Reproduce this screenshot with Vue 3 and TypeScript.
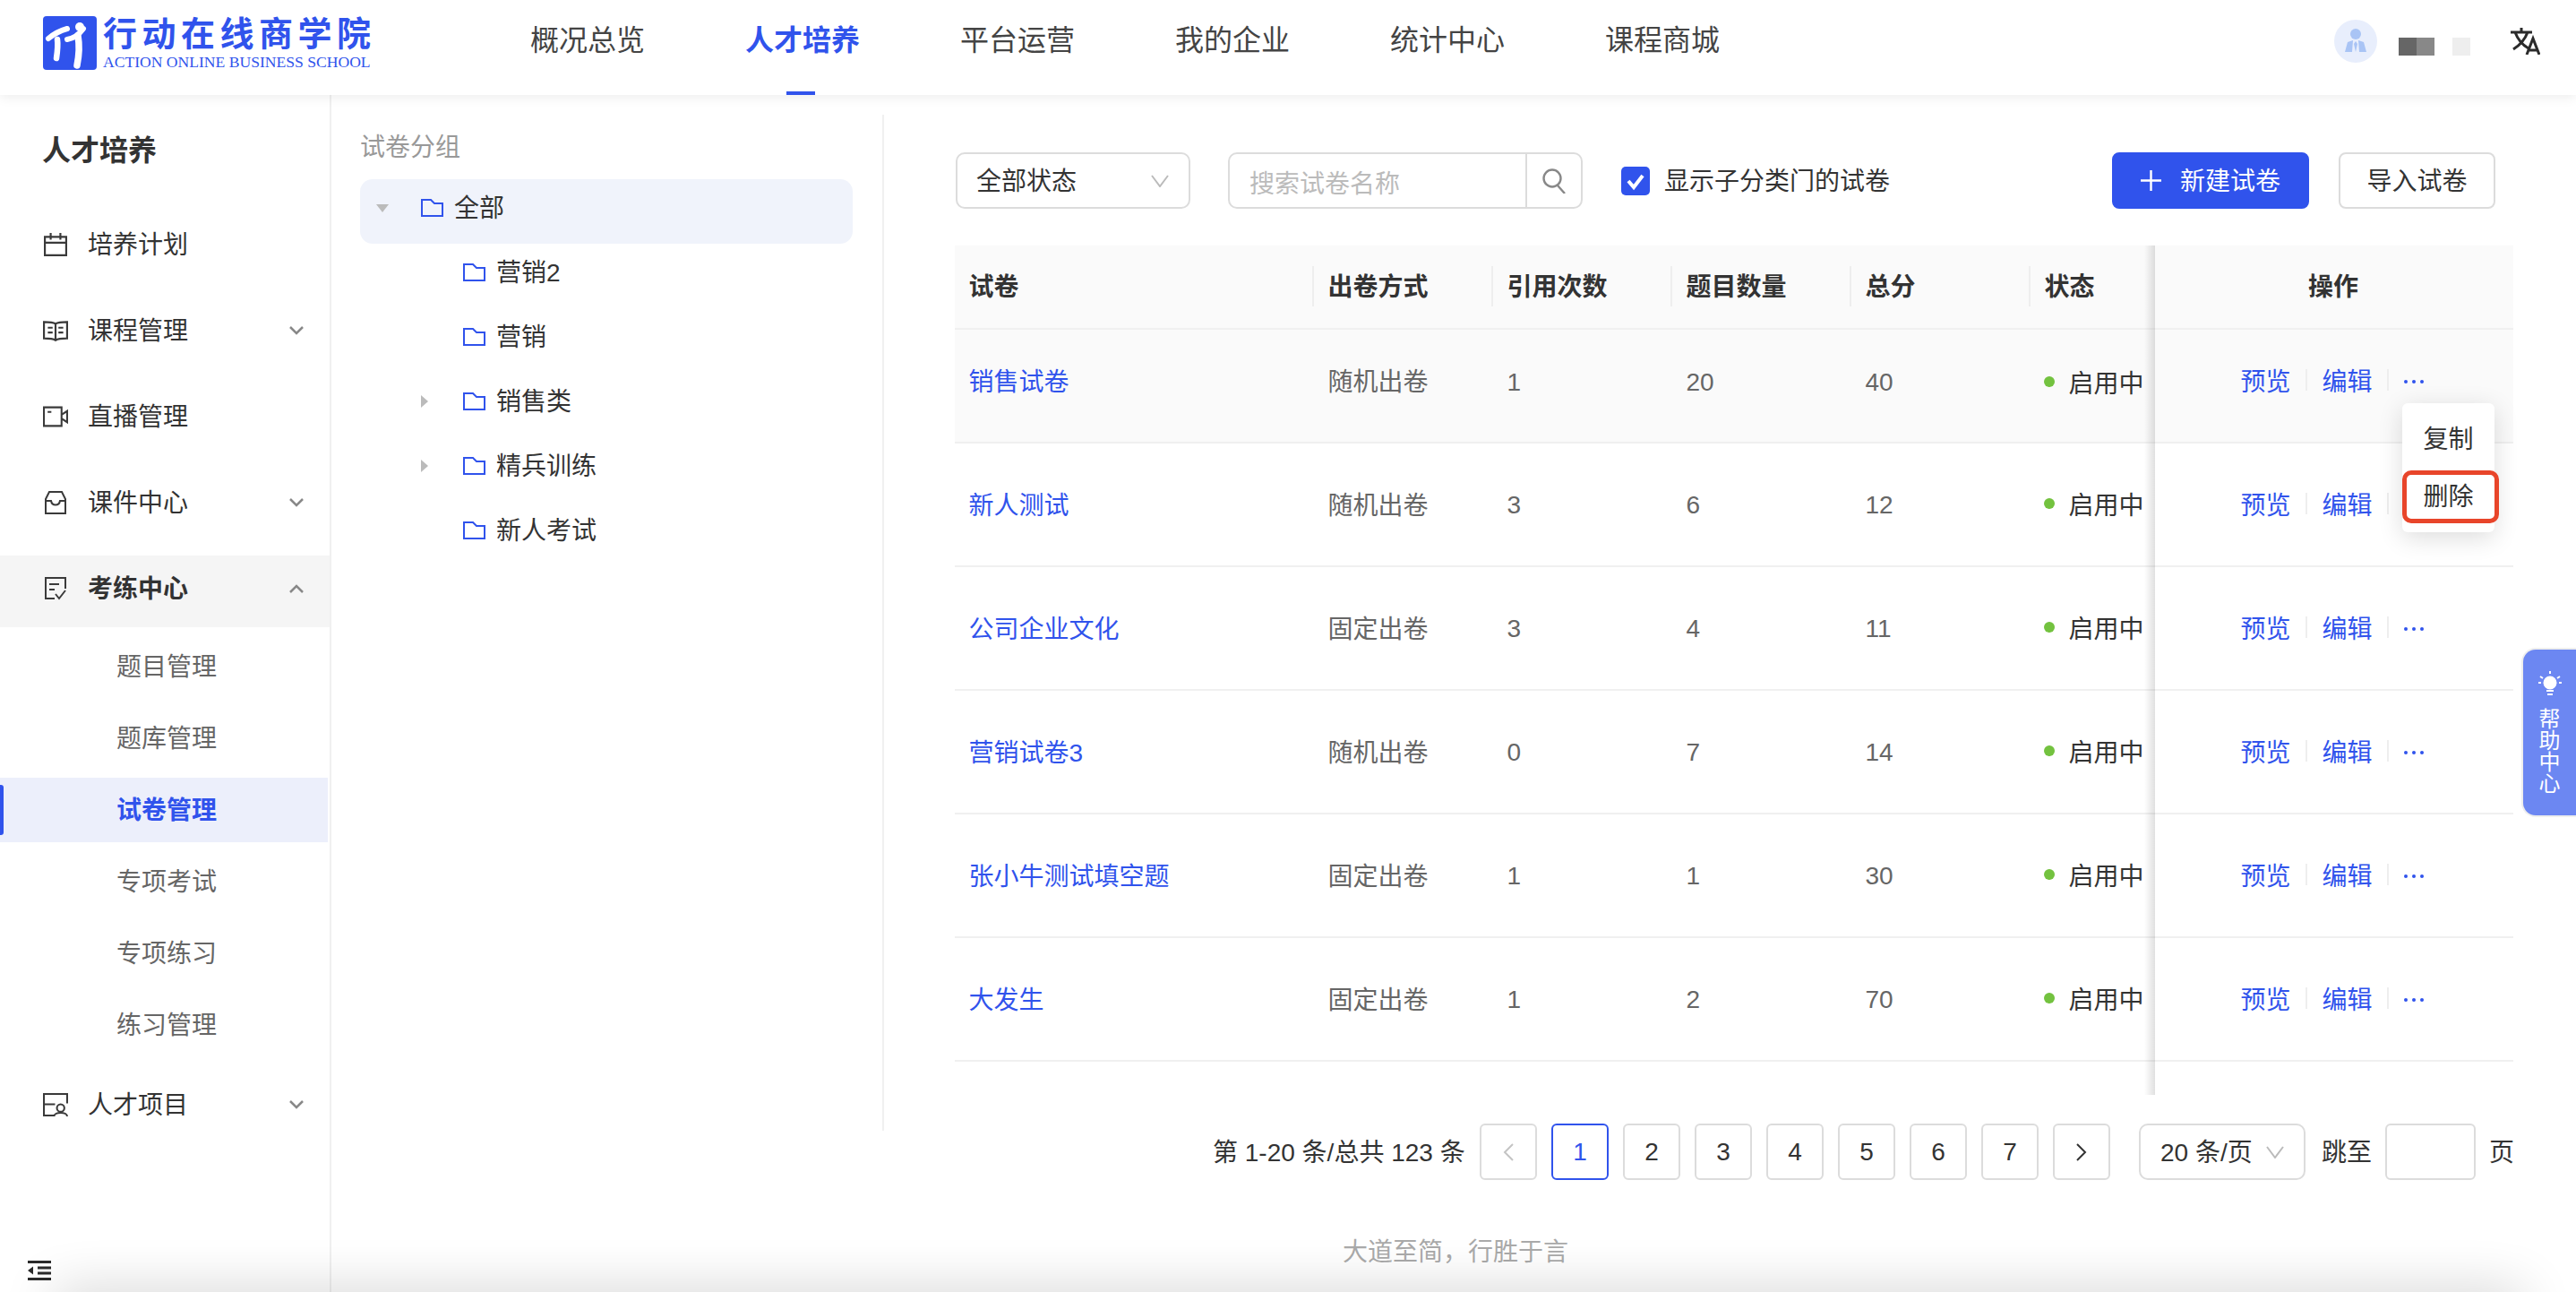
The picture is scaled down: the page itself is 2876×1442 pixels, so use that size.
<script setup lang="ts">
// #region state
const navItems = ['概况总览', '人才培养', '平台运营', '我的企业', '统计中心', '课程商城']

const subMenu = ['题目管理', '题库管理', '试卷管理', '专项考试', '专项练习', '练习管理']

const treeRows = [
  { label: '全部', level: 0, arrow: 'down', active: true },
  { label: '营销2', level: 1, arrow: '' },
  { label: '营销', level: 1, arrow: '' },
  { label: '销售类', level: 1, arrow: 'right' },
  { label: '精兵训练', level: 1, arrow: 'right' },
  { label: '新人考试', level: 1, arrow: '' }
]

const columns = ['试卷', '出卷方式', '引用次数', '题目数量', '总分', '状态']

const papers = [
  { name: '销售试卷', mode: '随机出卷', refs: 1, count: 20, score: 40 },
  { name: '新人测试', mode: '随机出卷', refs: 3, count: 6, score: 12 },
  { name: '公司企业文化', mode: '固定出卷', refs: 3, count: 4, score: 11 },
  { name: '营销试卷3', mode: '随机出卷', refs: 0, count: 7, score: 14 },
  { name: '张小牛测试填空题', mode: '固定出卷', refs: 1, count: 1, score: 30 },
  { name: '大发生', mode: '固定出卷', refs: 1, count: 2, score: 70 }
]

const pages = [1, 2, 3, 4, 5, 6, 7]
// #endregion
</script>

<template>
  <div class="page">
    <header class="topbar">
      <div class="logo">
        <svg class="logo-mark" viewBox="0 0 60 60">
          <rect width="60" height="60" rx="4" fill="#3053ec" />
          <g fill="none" stroke="#fff" stroke-linecap="round">
            <path d="M6 25C12 20 20 16 27 14" stroke-width="6" />
            <path d="M27 26C33 25 40 21 45 14" stroke-width="6" />
            <path d="M16 26C17 33 16 40 15 47" stroke-width="6.5" />
            <path d="M39 22C41 33 40 45 38 55" stroke-width="7.5" />
          </g>
          <circle cx="41" cy="12" r="5" fill="#fff" />
        </svg>
        <div class="logo-text">
          <div class="logo-title">行动在线商学院</div>
          <div class="logo-sub">ACTION ONLINE BUSINESS SCHOOL</div>
        </div>
      </div>

      <nav class="nav">
        <div
          v-for="item in navItems"
          :key="item"
          class="nav-item"
          :class="{ active: item === '人才培养' }"
        >
          {{ item }}
        </div>
      </nav>

      <div class="user">
        <div class="avatar">
          <svg viewBox="0 0 48 48" width="48" height="48">
            <circle cx="24" cy="16" r="6" fill="#a9c4f5" />
            <path d="M12 36l3-11 6-2-1 13zM36 36l-3-11-6-2 1 13z" fill="#a9c4f5" />
            <path d="M24 24l2 3-2 9-2-9z" fill="#a9c4f5" />
          </svg>
        </div>
        <div class="mosaic">
          <i class="m1" /><i class="m2" /><i class="m3" />
        </div>
        <svg class="translate" viewBox="0 0 33 30" fill="none" stroke="#2b2b2b" stroke-width="3">
          <path d="M0 5H24M12 0V5M5 5C8 13 13 19 20 23M19 5C16 13 11 19 3 24" />
          <path d="M18 30L25 12L32 30M20 25H30" />
        </svg>
      </div>
    </header>

    <div class="body">
      <aside class="sidebar">
        <div class="side-title">人才培养</div>

        <div class="menu-item">
          <svg class="menu-icon" viewBox="0 0 24 24">
            <path d="M1 4H23V23H1zM1 10H23M7 0V7M17 0V7" />
          </svg>
          <span>培养计划</span>
        </div>
        <div class="menu-item">
          <svg class="menu-icon" viewBox="0 0 26 24">
            <path d="M13 5C10 3 5 3 1 3V20C5 20 10 20 13 22C16 20 21 20 25 20V3C21 3 16 3 13 5zM13 5V22M5 9H10M5 14H10M16 9H21M16 14H21" />
          </svg>
          <span>课程管理</span>
          <svg class="chevron" viewBox="0 0 18 12"><path d="M2 2L9 9L16 2" /></svg>
        </div>
        <div class="menu-item">
          <svg class="menu-icon" viewBox="0 0 27 24">
            <path d="M1 2H20V22H1zM20 10L26 6V18L20 14M5 7H9" />
          </svg>
          <span>直播管理</span>
        </div>
        <div class="menu-item">
          <svg class="menu-icon" viewBox="0 0 24 26">
            <path d="M5 1H19L23 9V25H1V9zM1 11H7C8 17 16 17 17 11H23" />
          </svg>
          <span>课件中心</span>
          <svg class="chevron" viewBox="0 0 18 12"><path d="M2 2L9 9L16 2" /></svg>
        </div>
        <div class="menu-item open">
          <svg class="menu-icon" viewBox="0 0 24 26">
            <path d="M23 13V1H1V24H11M5 8H16M5 14H11M12 19L16 24L23 15" />
          </svg>
          <span>考练中心</span>
          <svg class="chevron" viewBox="0 0 18 12"><path d="M2 10L9 3L16 10" /></svg>
        </div>

        <div class="submenu">
          <div
            v-for="item in subMenu"
            :key="item"
            class="sub-item"
            :class="{ active: item === '试卷管理' }"
          >
            {{ item }}
          </div>
        </div>

        <div class="menu-item">
          <svg class="menu-icon" viewBox="0 0 27 25">
            <path d="M26 11V1H1V24H12M1 12H13" />
            <circle cx="19" cy="16" r="4" />
            <path d="M12 25C12 20 26 20 26 25" />
          </svg>
          <span>人才项目</span>
          <svg class="chevron" viewBox="0 0 18 12"><path d="M2 2L9 9L16 2" /></svg>
        </div>

        <div class="collapse">
          <svg viewBox="0 0 26 22" width="26" height="22" fill="#2b2b2b">
            <rect width="26" height="3" />
            <rect x="11" y="6.5" width="15" height="3" />
            <rect x="11" y="12.5" width="15" height="3" />
            <rect y="19" width="26" height="3" />
            <path d="M0 11L6 6.500V15.500z" />
          </svg>
        </div>
      </aside>

      <section class="tree">
        <div class="tree-title">试卷分组</div>
        <div
          v-for="row in treeRows"
          :key="row.label"
          class="tree-row"
          :class="[`level-${row.level}`, { active: row.active }]"
        >
          <span class="tree-arrow">
            <i v-if="row.arrow" :class="`tri-${row.arrow}`" />
          </span>
          <svg class="folder" viewBox="0 0 25 20" fill="none" stroke="#3053ec" stroke-width="2">
            <path d="M1 1H11L15 5H24V19H1z" />
          </svg>
          <span class="tree-label">{{ row.label }}</span>
        </div>
      </section>

      <main class="main">
        <div class="toolbar">
          <div class="select status-select">
            <span class="lift">全部状态</span>
            <svg viewBox="0 0 20 14" width="20" height="14" fill="none" stroke="#bbb" stroke-width="2"><path d="M1 1L10 13L19 1" /></svg>
          </div>
          <div class="search">
            <div class="search-input">搜索试卷名称</div>
            <div class="search-btn">
              <svg viewBox="0 0 28 28" width="28" height="28" fill="none" stroke="#888" stroke-width="2.400">
                <circle cx="12" cy="11" r="9.500" />
                <path d="M18 19L26 28" />
              </svg>
            </div>
          </div>
          <div class="check">
            <span class="check-box">
              <svg viewBox="0 0 32 32" width="32" height="32" fill="none" stroke="#fff" stroke-width="4"><path d="M8 16L14 23L24 10" /></svg>
            </span>
            <span class="lift">显示子分类门的试卷</span>
          </div>
          <button class="btn primary">
            <svg viewBox="0 0 23 23" width="23" height="23" stroke="#fff" stroke-width="2.400"><path d="M11.500 0V23M0 11.500H23" /></svg>
            <span class="lift">新建试卷</span>
          </button>
          <button class="btn"><span class="lift">导入试卷</span></button>
        </div>

        <div class="table">
          <div class="row head">
            <div v-for="col in columns" :key="col" class="cell">{{ col }}</div>
            <div class="cell ops">操作</div>
          </div>
          <div
            v-for="(paper, i) in papers"
            :key="paper.name"
            class="row"
            :class="{ hover: i === 0 }"
          >
            <div class="cell link">{{ paper.name }}</div>
            <div class="cell muted">{{ paper.mode }}</div>
            <div class="cell muted num">{{ paper.refs }}</div>
            <div class="cell muted num">{{ paper.count }}</div>
            <div class="cell muted num">{{ paper.score }}</div>
            <div class="cell status"><i class="dot" />启用中</div>
            <div class="cell ops">
              <span class="link">预览</span>
              <i class="op-sep" />
              <span class="link">编辑</span>
              <i class="op-sep" />
              <span class="more"><i /><i /><i /></span>
            </div>
          </div>

          <div class="fixed-shadow" />

          <div class="dropdown">
            <div class="drop-item">复制</div>
            <div class="drop-item">删除</div>
            <div class="mark" />
          </div>
        </div>

        <div class="pager">
          <span class="pager-total lift">第 1-20 条/总共 123 条</span>
          <div class="page-btn disabled">
            <svg viewBox="0 0 12 20" width="12" height="20" fill="none" stroke="#c4c4c4" stroke-width="2"><path d="M11 1L2 10L11 19" /></svg>
          </div>
          <div
            v-for="p in pages"
            :key="p"
            class="page-btn"
            :class="{ current: p === 1 }"
          >
            {{ p }}
          </div>
          <div class="page-btn">
            <svg viewBox="0 0 12 20" width="12" height="20" fill="none" stroke="#333" stroke-width="2"><path d="M1 1L10 10L1 19" /></svg>
          </div>
          <div class="select size-select">
            <span class="lift">20 条/页</span>
            <svg viewBox="0 0 20 14" width="20" height="14" fill="none" stroke="#bbb" stroke-width="2"><path d="M1 1L10 13L19 1" /></svg>
          </div>
          <span class="jump lift">跳至</span>
          <div class="jump-input" />
          <span class="jump-unit lift">页</span>
        </div>

        <div class="slogan">大道至简，行胜于言</div>
      </main>
    </div>

    <div class="help">
      <svg viewBox="0 0 26 28" width="26" height="28" fill="none" stroke="#fff" stroke-width="2">
        <circle cx="13" cy="13" r="6.500" fill="#fff" />
        <path d="M13 0V3M2 6L5 8M24 6L21 8M0 13H3M23 13H26M9 22H17M10 26H16" />
      </svg>
      <div class="help-text">帮助中心</div>
    </div>

    <div class="edge-shadow" />
  </div>
</template>

<style>
html,
body {
  margin: 0;
  background: #fff;
}
</style>

<style scoped>
.page {
  position: relative;
  display: flex;
  flex-direction: column;
  height: 1442px;
  overflow: hidden;
  background: #fff;
  color: #333;
  font-family: "Liberation Sans", "Noto Sans CJK SC", sans-serif;
  font-size: 28px;
}

.lift {
  margin-bottom: 4px;
}

/* top bar */
.topbar {
  position: relative;
  z-index: 2;
  display: flex;
  align-items: center;
  flex: 0 0 106px;
  padding: 0 40px 0 48px;
  background: #fff;
  box-shadow: 0 3px 12px rgba(0, 0, 0, 0.07);
}

.logo {
  display: flex;
  gap: 7px;
  margin-bottom: 10px;
}

.logo-mark {
  width: 60px;
  height: 60px;
}

.logo-text {
  width: 299px;
  color: #3053ec;
}

.logo-title {
  font-size: 38px;
  font-weight: 700;
  line-height: 40px;
  letter-spacing: 5.500px;
  white-space: nowrap;
}

.logo-sub {
  margin-top: 2px;
  font-family: "Liberation Serif", serif;
  font-size: 17.600px;
  line-height: 18px;
  white-space: nowrap;
}

.nav {
  display: flex;
  align-self: stretch;
  gap: 112px;
  margin-left: 178px;
}

.nav-item {
  position: relative;
  display: flex;
  align-items: center;
  padding-bottom: 23px;
  font-size: 32px;
  color: #444;
}

.nav-item.active {
  color: #3053ec;
  font-weight: 700;
}

.nav-item.active::after {
  content: "";
  position: absolute;
  bottom: 0;
  left: 46px;
  width: 32px;
  height: 4px;
  background: #3053ec;
}

.user {
  display: flex;
  align-items: center;
  margin-left: auto;
  margin-bottom: 14px;
}

.avatar {
  width: 48px;
  height: 48px;
  border-radius: 50%;
  background: #e8eefc;
}

.mosaic {
  display: flex;
  margin: 12px 0 0 24px;
}

.mosaic i {
  width: 20px;
  height: 20px;
}

.m1 { background: #666; }
.m2 { background: #888; }
.m3 { margin-left: 20px; background: #eee; }

.translate {
  width: 33px;
  height: 30px;
  margin-left: 45px;
}

/* left menu */
.body {
  display: flex;
  flex: 1;
  min-height: 0;
}

.sidebar {
  display: flex;
  flex-direction: column;
  flex: 0 0 370px;
  box-sizing: border-box;
  border-right: 2px solid #f0f0f0;
}

.side-title {
  padding: 38px 0 0 47px;
  margin-bottom: 44px;
  font-size: 32px;
  font-weight: 700;
  line-height: 48px;
}

.menu-item {
  display: flex;
  align-items: center;
  flex: 0 0 80px;
  box-sizing: border-box;
  margin-bottom: 16px;
  padding: 0 28px 10px 0;
}

.menu-item.open {
  margin-bottom: 8px;
  background: #f5f5f5;
  font-weight: 700;
}

.menu-icon {
  width: 28px;
  height: 26px;
  margin: 4px 22px 0 48px;
  fill: none;
  stroke: #3a3a3a;
  stroke-width: 2;
}

.chevron {
  width: 18px;
  height: 12px;
  margin: 4px 0 0 auto;
  fill: none;
  stroke: #888;
  stroke-width: 2.500;
}

.submenu {
  display: flex;
  flex-direction: column;
  gap: 8px;
  margin-bottom: 16px;
  color: #666;
}

.sub-item {
  position: relative;
  display: flex;
  align-items: center;
  box-sizing: border-box;
  height: 72px;
  margin-right: 2px;
  padding: 0 0 4px 130px;
}

.sub-item.active {
  background: #eceffb;
  color: #3053ec;
  font-weight: 700;
}

.sub-item.active::before {
  content: "";
  position: absolute;
  top: 8px;
  left: 0;
  width: 4px;
  height: 56px;
  border-radius: 0 3px 3px 0;
  background: #3053ec;
}

.collapse {
  display: flex;
  margin-top: auto;
  padding: 0 0 13px 31px;
}

/* group tree */
.tree {
  flex: 0 0 617px;
  box-sizing: border-box;
  height: 1134px;
  margin-top: 22px;
  padding: 20px 33px 0 32px;
  border-right: 2px solid #f0f0f0;
}

.tree-title {
  margin-bottom: 18px;
  color: #999;
  line-height: 34px;
}

.tree-row {
  display: flex;
  align-items: center;
  box-sizing: border-box;
  height: 72px;
  padding-bottom: 8px;
  border-radius: 14px;
}

.tree-label {
  margin-bottom: 4px;
}

.tree-row.active {
  background: #f0f3fb;
}

.level-0 { padding-left: 18px; }
.level-1 { padding-left: 65px; }

.tree-arrow {
  display: flex;
  flex: 0 0 50px;
}

.tri-down {
  width: 0;
  height: 0;
  border: 7px solid transparent;
  border-top: 9px solid #bbb;
  border-bottom: 0;
}

.tri-right {
  width: 0;
  height: 0;
  margin-left: 3px;
  border: 7px solid transparent;
  border-left: 8px solid #bbb;
  border-right: 0;
}

.folder {
  width: 25px;
  height: 20px;
  margin-right: 12px;
}

/* main */
.main {
  flex: 1;
  min-width: 0;
  padding: 64px 70px 0 79px;
}

.toolbar {
  display: flex;
  align-items: center;
  height: 63px;
  padding: 0 20px 0 1px;
}

.select {
  display: flex;
  align-items: center;
  justify-content: space-between;
  flex-shrink: 0;
  box-sizing: border-box;
  height: 63px;
  border: 2px solid #dcdcdc;
  border-radius: 10px;
}

.status-select {
  width: 262px;
  padding: 0 22px 0 21px;
}

.search {
  display: flex;
  box-sizing: border-box;
  width: 396px;
  height: 63px;
  margin-left: 42px;
  border: 2px solid #dcdcdc;
  border-radius: 10px;
}

.search-input {
  flex: 1;
  padding: 14px 0 0 22px;
  color: #bbb;
  line-height: 40px;
}

.search-btn {
  display: flex;
  align-items: center;
  justify-content: center;
  width: 60px;
  border-left: 2px solid #dcdcdc;
}

.check {
  display: flex;
  align-items: center;
  gap: 16px;
  margin-left: 43px;
}

.check-box {
  width: 32px;
  height: 32px;
  border-radius: 5px;
  background: #3053ec;
}

.btn {
  display: flex;
  align-items: center;
  justify-content: center;
  box-sizing: border-box;
  width: 175px;
  height: 63px;
  margin-left: 33px;
  border: 2px solid #dcdcdc;
  border-radius: 8px;
  background: #fff;
  color: #333;
  font: inherit;
}

.btn.primary {
  gap: 21px;
  width: 220px;
  margin-left: auto;
  border-color: #3053ec;
  background: #3053ec;
  color: #fff;
}

.table {
  position: relative;
  height: 948px;
  margin-top: 41px;
}

.row {
  display: grid;
  grid-template-columns: 399px 200px 200px 200px 200px 141px 400px;
  box-sizing: border-box;
  height: 138px;
  border-bottom: 2px solid #f0f0f0;
}

.row.head {
  height: 94px;
  background: #fafafa;
  font-weight: 700;
}

.row.hover {
  height: 127px;
  background: #fafafa;
}

.cell {
  display: flex;
  align-items: center;
  padding: 0 0 2px 17.500px;
  white-space: nowrap;
}

.head .cell {
  padding-bottom: 4px;
}

.row .cell:first-child {
  padding-left: 15.500px;
}

.cell.num {
  padding: 2px 0 0 17.500px;
}

.row.hover .cell {
  padding-bottom: 14px;
}

.row.hover .cell.num,
.row.hover .cell.status {
  padding-bottom: 9px;
}

.head .cell {
  position: relative;
}

.head .cell + .cell:not(.ops)::before {
  content: "";
  position: absolute;
  top: 23px;
  left: 0;
  width: 2px;
  height: 45px;
  background: #eee;
}

.link {
  color: #3053ec;
}

.muted {
  color: #666;
}

.cell.status {
  padding-left: 17px;
}

.dot {
  width: 12px;
  height: 12px;
  margin-right: 15.500px;
  border-radius: 50%;
  background: #73c23f;
}

.cell.ops {
  padding-left: 95.500px;
  background: #fff;
}

.head .cell.ops {
  justify-content: center;
  padding-left: 0;
  padding-right: 2px;
  background: #fafafa;
}

.row.hover .cell.ops {
  background: #fafafa;
}

.op-sep {
  width: 2px;
  height: 24px;
  margin: 0 16.500px;
  background: #eee;
}

.more {
  display: flex;
  gap: 5px;
  margin: 4px 0 0 0;
}

.more i {
  width: 4px;
  height: 4px;
  border-radius: 50%;
  background: #3053ec;
}

.fixed-shadow {
  position: absolute;
  top: 0;
  bottom: 0;
  left: 1328px;
  width: 12px;
  background: linear-gradient(90deg, rgba(0, 0, 0, 0), rgba(0, 0, 0, 0.12));
}

.dropdown {
  position: absolute;
  top: 176px;
  left: 1616px;
  box-sizing: border-box;
  width: 103px;
  height: 144px;
  padding-top: 6px;
  border-radius: 6px;
  background: #fff;
  box-shadow: 0 6px 28px rgba(0, 0, 0, 0.14);
}

.drop-item {
  display: flex;
  align-items: center;
  justify-content: center;
  height: 64px;
}

.mark {
  position: absolute;
  top: 75px;
  left: 0;
  box-sizing: border-box;
  width: 108px;
  height: 59px;
  border: 5px solid #e8452a;
  border-radius: 10px;
}

/* pagination */
.pager {
  display: flex;
  align-items: center;
  height: 63px;
  margin-top: 32px;
  padding-left: 288px;
  white-space: nowrap;
}

.pager-total {
  flex: 0 0 298px;
}

.page-btn {
  display: flex;
  align-items: center;
  justify-content: center;
  flex-shrink: 0;
  box-sizing: border-box;
  width: 64px;
  height: 63px;
  margin-right: 16px;
  border: 2px solid #dcdcdc;
  border-radius: 6px;
}

.page-btn.current {
  border-color: #3053ec;
  color: #3053ec;
}

.size-select {
  width: 186px;
  margin-left: 16px;
  padding: 0 22px 0 22px;
}

.jump {
  flex-shrink: 0;
  margin-left: 18px;
}

.jump-input {
  flex-shrink: 0;
  box-sizing: border-box;
  width: 101px;
  height: 63px;
  margin-left: 15px;
  border: 2px solid #dcdcdc;
  border-radius: 6px;
}

.jump-unit {
  flex-shrink: 0;
  margin-left: 15px;
}

.slogan {
  margin: 64px 0 0 433px;
  color: #aaa;
  line-height: 34px;
  white-space: nowrap;
}

/* floating help tab */
.help {
  position: absolute;
  top: 723px;
  right: 0;
  display: flex;
  flex-direction: column;
  align-items: center;
  box-sizing: border-box;
  width: 61px;
  height: 189px;
  padding-top: 24px;
  border: 2px solid #eee;
  border-right: 0;
  border-radius: 16px 0 0 16px;
  background: #6c87f2;
  color: #fff;
}

.help-text {
  width: 24px;
  margin-top: 14px;
  font-size: 24px;
  line-height: 24px;
  text-align: center;
}

.edge-shadow {
  position: absolute;
  top: 100%;
  left: 60px;
  right: 60px;
  height: 40px;
  box-shadow: 0 0 60px rgba(0, 0, 0, 0.2);
  pointer-events: none;
}
</style>
